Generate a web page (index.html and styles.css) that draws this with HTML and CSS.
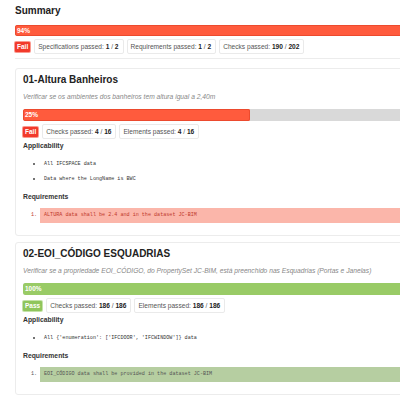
FILE: index.html
```html
<!DOCTYPE html>
<html lang="pt">
<head>
  <meta charset="UTF-8">
  <meta name="viewport" content="width=device-width, initial-scale=1.0">
  <title>IDS Report</title>
  <link rel="stylesheet" href="styles.css">
</head>
<body>

  <main class="report">

    <section class="summary">
      <h2>Summary</h2>
      <div class="bar fail"><div class="fill" style="width: 94%">94%</div></div>
      <div class="badges">
        <span class="status fail">Fail</span>
        <span class="stat">Specifications passed: <b>1</b> / <b>2</b></span>
        <span class="stat">Requirements passed: <b>1</b> / <b>2</b></span>
        <span class="stat">Checks passed: <b>190</b> / <b>202</b></span>
      </div>
    </section>

    <hr class="divider">

    <section class="spec">
      <h3>01-Altura Banheiros</h3>
      <p class="description">Verificar se os ambientes dos banheiros tem altura igual a 2,40m</p>
      <div class="bar fail"><div class="fill" style="width: 25%">25%</div></div>
      <div class="badges">
        <span class="status fail">Fail</span>
        <span class="stat">Checks passed: <b>4</b> / <b>16</b></span>
        <span class="stat">Elements passed: <b>4</b> / <b>16</b></span>
      </div>
      <h4>Applicability</h4>
      <ul class="applicability">
        <li>All IFCSPACE data</li>
        <li>Data where the LongName is BWC</li>
      </ul>
      <h4>Requirements</h4>
      <ol class="requirements">
        <li class="fail"><span>ALTURA data shall be 2.4 and in the dataset JC-BIM</span></li>
      </ol>
    </section>

    <section class="spec">
      <h3>02-EOI_CÓDIGO ESQUADRIAS</h3>
      <p class="description">Verificar se a propriedade EOI_CÓDIGO, do PropertySet JC-BIM, está preenchido nas Esquadrias (Portas e Janelas)</p>
      <div class="bar pass"><div class="fill" style="width: 100%">100%</div></div>
      <div class="badges">
        <span class="status pass">Pass</span>
        <span class="stat">Checks passed: <b>186</b> / <b>186</b></span>
        <span class="stat">Elements passed: <b>186</b> / <b>186</b></span>
      </div>
      <h4>Applicability</h4>
      <ul class="applicability">
        <li>All {'enumeration': ['IFCDOOR', 'IFCWINDOW']} data</li>
      </ul>
      <h4>Requirements</h4>
      <ol class="requirements">
        <li class="pass"><span>EOI_CÓDIGO data shall be provided in the dataset JC-BIM</span></li>
      </ol>
    </section>

  </main>

</body>
</html>
```

FILE: styles.css
```css
html, body{
  margin: 0; padding: 0;
  overflow: hidden;
  background-color: #fff;
  font-family: "Liberation Sans", Arial, sans-serif;
  color: #222;
}

main.report{
  width: 925px;
  padding: 5px 0 0 15px;
}

h2, h3{
  margin: 0;
  font-size: 10px;
  line-height: 12px;
  font-weight: bold;
  color: #222;
}

/* progress bars */
.bar{
  height: 12px;
  background-color: #d9d9d9;
  border-radius: 2px;
  overflow: hidden;
}

.bar .fill{
  height: 100%;
  box-sizing: border-box;
  padding-left: 2px;
  font-size: 6.5px;
  line-height: 12px;
  font-weight: bold;
  color: #fff;
  border-radius: 2px;
}

.bar.fail .fill{ background-color: #ff5b3d; box-shadow: inset 0 0 0 1px #ec4a2e; }
.bar.pass .fill{ background-color: #99cb66; }

.summary .bar{ margin-top: 8px; height: 11px; }
.summary .bar .fill{ line-height: 11px; }

/* badges */
.badges{
  display: flex;
  align-items: center;
  gap: 3px;
  margin-top: 3px;
}

.badges .status{
  font-size: 6.5px;
  line-height: 8px;
  font-weight: bold;
  color: #fff;
  padding: 1px 2px;
  border-radius: 1px;
  margin-right: 1px;
}

.status.fail{ background-color: #f23a2b; box-shadow: 0 0 0 1px #fa9a90; }
.status.pass{ background-color: #8fc55c; box-shadow: 0 0 0 1px #c4e2a8; }

.badges .stat{
  font-size: 6.6px;
  line-height: 7px;
  color: #555;
  padding: 3px 4px 3px 3px;
  border: 1px solid #eaeaea;
  border-radius: 2px;
}

.badges .stat b{ color: #222; }

hr.divider{
  margin: 4px 0 0;
  border: 0;
  border-top: 1px solid #ececec;
}

/* specification cards */
section.spec{
  margin-top: 9px;
  padding: 0 7px 12px;
  border: 1px solid #ececec;
  border-radius: 3px;
}

section.spec + section.spec{ margin-top: 6px; }

section.spec h3{ padding-top: 5px; }

section.spec p.description{
  margin: 7px 0 0;
  font-size: 6.7px;
  line-height: 8px;
  font-style: italic;
  color: #888;
}

section.spec .bar{ margin-top: 8px; }

section.spec h4{
  margin: 3px 0 0;
  font-size: 6.8px;
  line-height: 8px;
  font-weight: bold;
  color: #333;
}

ul.applicability{
  list-style: none;
  margin: 11px 0 0;
  padding: 0 0 0 10px;
}

ul.applicability li{
  display: flex;
  align-items: center;
  font-family: "Liberation Mono", monospace;
  font-size: 5.1px;
  line-height: 6px;
  color: #333;
  margin-bottom: 9px;
}

ul.applicability li::before{
  content: "";
  width: 2px; height: 2px;
  border-radius: 50%;
  background-color: #444;
  margin-right: 9px;
}

ul.applicability + h4{ margin-top: 11px; }

ol.requirements{
  list-style: none;
  margin: 7px 0 0;
  padding: 0 0 0 8px;
}

ol.requirements li{
  display: flex;
  align-items: center;
  font-family: "Liberation Mono", monospace;
  font-size: 5.1px;
  line-height: 15px;
  counter-increment: req;
}

ol.requirements li::before{
  content: counter(req) ".";
  width: 9px;
}

ol.requirements li span{
  flex: 1;
  padding-left: 4px;
}

ol.requirements li.fail{ color: #c0392b; }
ol.requirements li.fail span{ background-color: #fbb6aa; }
ol.requirements li.pass{ color: #555; }
ol.requirements li.pass span{ background-color: #b6cea1; }
```
